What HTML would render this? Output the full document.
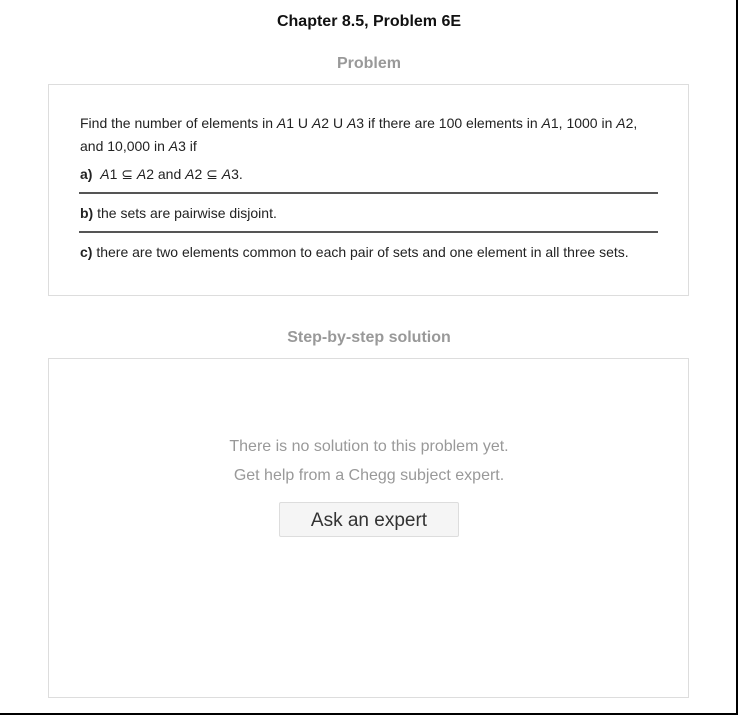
<!DOCTYPE html>
<html><head><style>
body{margin:0;width:738px;height:715px;position:relative;background:#fff;font-family:"Liberation Sans",Arial,sans-serif;overflow:hidden}
.a{position:absolute}
.t{font-size:14px;color:#222;position:absolute;left:80px;white-space:nowrap}
hr{position:absolute;left:79px;width:579px;margin:0;border:0;border-top:2px solid #555}
</style></head><body>
<div class="a" style="left:0;top:13px;width:738px;text-align:center;font-weight:bold;font-size:16px;color:#111">Chapter 8.5, Problem 6E</div>
<div class="a" style="left:0;top:55px;width:738px;text-align:center;font-weight:bold;font-size:16px;color:#999">Problem</div>
<div class="a" style="left:48px;top:84px;width:639px;height:210px;border:1px solid #ddd"></div>
<div class="t" style="top:115px">Find the number of elements in <i>A</i>1 U <i>A</i>2 U <i>A</i>3 if there are 100 elements in <i>A</i>1, 1000 in <i>A</i>2,</div>
<div class="t" style="top:138px">and 10,000 in <i>A</i>3 if</div>
<div class="t" style="top:166px"><b>a)</b>&nbsp; <i>A</i>1 ⊆ <i>A</i>2 and <i>A</i>2 ⊆ <i>A</i>3.</div>
<hr style="top:192px">
<div class="t" style="top:205px"><b>b)</b> the sets are pairwise disjoint.</div>
<hr style="top:231px">
<div class="t" style="top:244px"><b>c)</b> there are two elements common to each pair of sets and one element in all three sets.</div>
<div class="a" style="left:0;top:329px;width:738px;text-align:center;font-weight:bold;font-size:16px;color:#999">Step-by-step solution</div>
<div class="a" style="left:48px;top:358px;width:639px;height:338px;border:1px solid #ddd"></div>
<div class="a" style="left:0;top:438px;width:738px;text-align:center;font-size:16px;color:#999">There is no solution to this problem yet.</div>
<div class="a" style="left:0;top:467px;width:738px;text-align:center;font-size:16px;color:#999">Get help from a Chegg subject expert.</div>
<div class="a" style="left:279px;top:502px;width:178px;height:33px;border:1px solid #ddd;border-radius:2px;background:#f5f5f5;text-align:center;line-height:36px;font-size:19px;color:#333">Ask an expert</div>
<div class="a" style="left:736px;top:0;width:2px;height:715px;background:#000"></div>
<div class="a" style="left:0;top:713px;width:738px;height:2px;background:#000"></div>
</body></html>
